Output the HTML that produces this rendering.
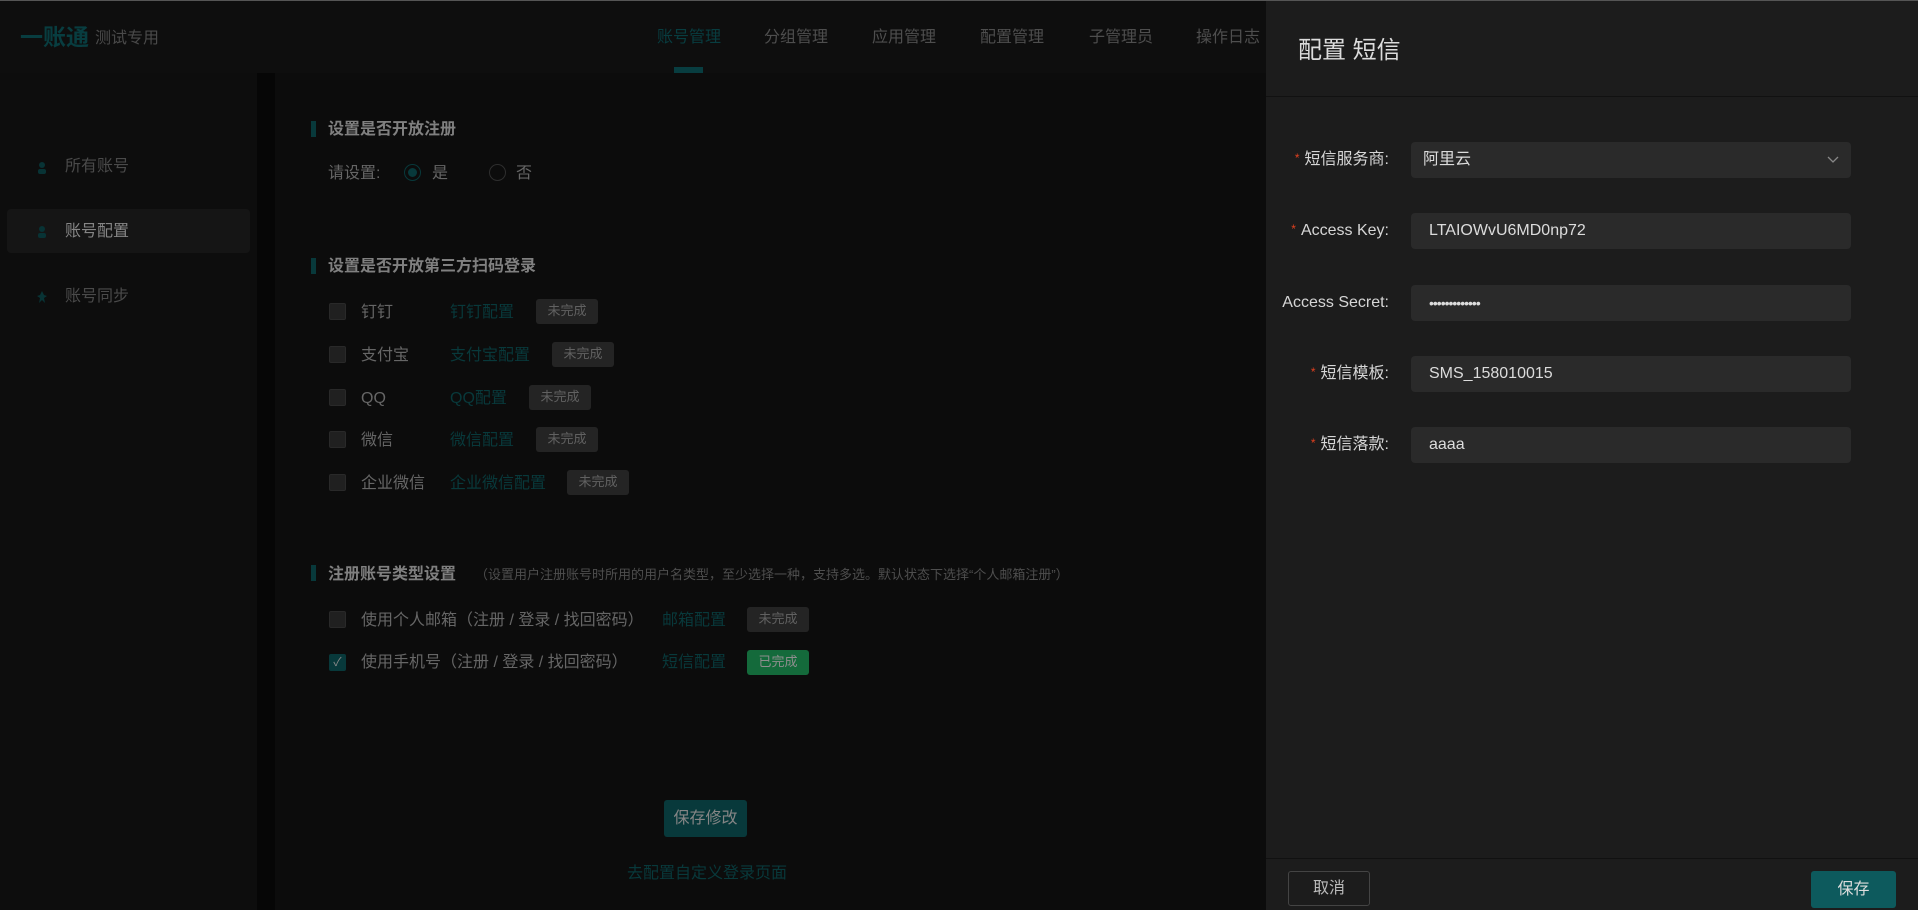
<!DOCTYPE html>
<html><head><meta charset="utf-8"><style>
*{margin:0;padding:0;box-sizing:border-box}
body{width:1918px;height:910px;overflow:hidden;background:#0c0c0c;font-family:"Liberation Sans","Noto Sans CJK SC",sans-serif;position:relative;color:#777}
.a{position:absolute;white-space:nowrap;line-height:1.2}
.top{position:absolute;left:0;top:0;width:1918px;height:1px;background:#555}
.hdr{position:absolute;left:0;top:1px;width:1266px;height:72px;background:#0e0e0e}
.nav{font-size:16px;color:#4e4e4e;top:28px}
.side{position:absolute;left:0;top:73px;width:257px;height:837px;background:#0d0d0d}
.gap{position:absolute;left:257px;top:73px;width:18px;height:837px;background:#060606}
.si{font-size:16px;color:#4a4a4a;left:65px}
.ic{position:absolute;left:37px;width:10px;height:12px}
.sec{font-size:16px;font-weight:bold;color:#808080;left:328px}
.bar{position:absolute;left:311px;width:5px;height:16px;background:#08393b}
.cb{position:absolute;left:329px;width:17px;height:17px;background:#202020;border:1px solid #292929;border-radius:2px}
.lb{font-size:16px;color:#666;left:361px}
.lk{font-size:16px;color:#08393b}
.bd{position:absolute;height:25px;background:#242424;border-radius:3px;color:#616161;font-size:13px;line-height:24px;text-align:center}
.dr{position:absolute;left:1266px;top:1px;width:652px;height:909px;background:#1c1c1c}
.fl{font-size:16px;color:#d6d6d6;text-align:right;right:529px}
.fl b{color:#e0401f;font-weight:normal;font-size:12px;margin-right:5px;vertical-align:2px}
.in{position:absolute;left:1411px;width:440px;height:36px;background:#2a2a2a;border-radius:4px;color:#dcdcdc;font-size:16px;line-height:36px;padding-left:18px}
</style></head><body>
<div class="hdr"></div>
<div class="top"></div>
<div class="a" style="left:20px;top:24px;font-size:23px;font-weight:bold;color:#083d40">一账通</div>
<div class="a" style="left:95px;top:29px;font-size:16px;color:#4a4a4a">测试专用</div>
<div class="a nav" style="left:657px;color:#083d40">账号管理</div>
<div class="a nav" style="left:764px">分组管理</div>
<div class="a nav" style="left:872px">应用管理</div>
<div class="a nav" style="left:980px">配置管理</div>
<div class="a nav" style="left:1089px">子管理员</div>
<div class="a nav" style="left:1196px">操作日志</div>
<div class="a" style="left:674px;top:67px;width:29px;height:6px;background:#083d40"></div>
<div class="side"></div><div class="gap"></div>
<div class="ic" style="top:161px"><svg width="10" height="12"><circle cx="5" cy="3" r="3" fill="#083335"/><rect x="1" y="7" width="8" height="5" rx="2" fill="#083335"/></svg></div>
<div class="a si" style="top:157px">所有账号</div>
<div class="a" style="left:7px;top:209px;width:243px;height:44px;background:#151515;border-radius:4px"></div>
<div class="ic" style="top:225px"><svg width="10" height="12"><circle cx="5" cy="3" r="3" fill="#083335"/><rect x="1" y="7" width="8" height="5" rx="2" fill="#083335"/></svg></div>
<div class="a si" style="top:222px;color:#858585">账号配置</div>
<div class="ic" style="top:290px"><svg width="10" height="12"><path d="M5 0L7 4L10 5L7 7L8 12L5 9L2 12L3 7L0 5L3 4Z" fill="#083335"/></svg></div>
<div class="a si" style="top:287px">账号同步</div>

<div class="bar" style="top:121px"></div><div class="a sec" style="top:120px">设置是否开放注册</div>
<div class="a lb" style="left:328px;top:164px">请设置:</div>
<div class="a" style="left:404px;top:164px;width:17px;height:17px;border:1px solid #08393b;border-radius:50%"><div style="margin:3px;width:9px;height:9px;border-radius:50%;background:#08393b"></div></div>
<div class="a lb" style="left:432px;top:164px">是</div>
<div class="a" style="left:489px;top:164px;width:17px;height:17px;border:1px solid #2e2e2e;border-radius:50%"></div>
<div class="a lb" style="left:516px;top:164px">否</div>

<div class="bar" style="top:258px"></div><div class="a sec" style="top:257px">设置是否开放第三方扫码登录</div>
<div class="cb" style="top:303px"></div><div class="a lb" style="top:303px">钉钉</div><div class="a lk" style="left:450px;top:303px">钉钉配置</div><div class="bd" style="left:536px;top:299px;width:62px">未完成</div>
<div class="cb" style="top:346px"></div><div class="a lb" style="top:346px">支付宝</div><div class="a lk" style="left:450px;top:346px">支付宝配置</div><div class="bd" style="left:552px;top:342px;width:62px">未完成</div>
<div class="cb" style="top:389px"></div><div class="a lb" style="top:389px">QQ</div><div class="a lk" style="left:450px;top:389px">QQ配置</div><div class="bd" style="left:529px;top:385px;width:62px">未完成</div>
<div class="cb" style="top:431px"></div><div class="a lb" style="top:431px">微信</div><div class="a lk" style="left:450px;top:431px">微信配置</div><div class="bd" style="left:536px;top:427px;width:62px">未完成</div>
<div class="cb" style="top:474px"></div><div class="a lb" style="top:474px">企业微信</div><div class="a lk" style="left:450px;top:474px">企业微信配置</div><div class="bd" style="left:567px;top:470px;width:62px">未完成</div>

<div class="bar" style="top:565px"></div><div class="a sec" style="top:565px">注册账号类型设置</div>
<div class="a" style="left:475px;top:567px;font-size:13px;color:#4e4e4e">（设置用户注册账号时所用的用户名类型，至少选择一种，支持多选。默认状态下选择“个人邮箱注册”）</div>
<div class="cb" style="top:611px"></div><div class="a lb" style="top:611px">使用个人邮箱（注册 / 登录 / 找回密码）</div><div class="a lk" style="left:662px;top:611px">邮箱配置</div><div class="bd" style="left:747px;top:607px;width:62px">未完成</div>
<div class="cb" style="top:654px;background:#08393b;border-color:#08393b;color:#888;font-size:12px;line-height:15px;text-align:center">✓</div><div class="a lb" style="top:653px">使用手机号（注册 / 登录 / 找回密码）</div><div class="a lk" style="left:662px;top:653px">短信配置</div><div class="bd" style="left:747px;top:650px;width:62px;background:#146a3b;color:#8e8e8e">已完成</div>

<div class="a" style="left:664px;top:800px;width:83px;height:37px;background:#08393b;border-radius:3px;color:#858585;font-size:16px;line-height:37px;text-align:center">保存修改</div>
<div class="a lk" style="left:627px;top:864px">去配置自定义登录页面</div>

<div class="dr"></div>
<div class="a" style="left:1266px;top:96px;width:652px;height:1px;background:#111"></div>
<div class="a" style="left:1298px;top:37px;font-size:24px;color:#dcdcdc">配置 短信</div>
<div class="a fl" style="top:150px"><b>*</b>短信服务商:</div>
<div class="in" style="top:142px;padding-left:12px">阿里云<svg style="position:absolute;right:12px;top:14px" width="12" height="8"><path d="M1 1L6 6L11 1" stroke="#888" fill="none" stroke-width="1.3"/></svg></div>
<div class="a fl" style="top:221px"><b>*</b>Access Key:</div>
<div class="in" style="top:213px">LTAIOWvU6MD0np72</div>
<div class="a fl" style="top:293px">Access Secret:</div>
<div class="in" style="top:285px;font-size:14px;letter-spacing:-1px">•••••••••••••</div>
<div class="a fl" style="top:364px"><b>*</b>短信模板:</div>
<div class="in" style="top:356px">SMS_158010015</div>
<div class="a fl" style="top:435px"><b>*</b>短信落款:</div>
<div class="in" style="top:427px">aaaa</div>
<div class="a" style="left:1266px;top:858px;width:652px;height:1px;background:#111"></div>
<div class="a" style="left:1288px;top:871px;width:82px;height:35px;border:1px solid #444;border-radius:3px;color:#bbb;font-size:16px;line-height:33px;text-align:center">取消</div>
<div class="a" style="left:1811px;top:871px;width:85px;height:37px;background:#0d5a5d;border-radius:3px;color:#ddd;font-size:16px;line-height:37px;text-align:center">保存</div>
</body></html>
